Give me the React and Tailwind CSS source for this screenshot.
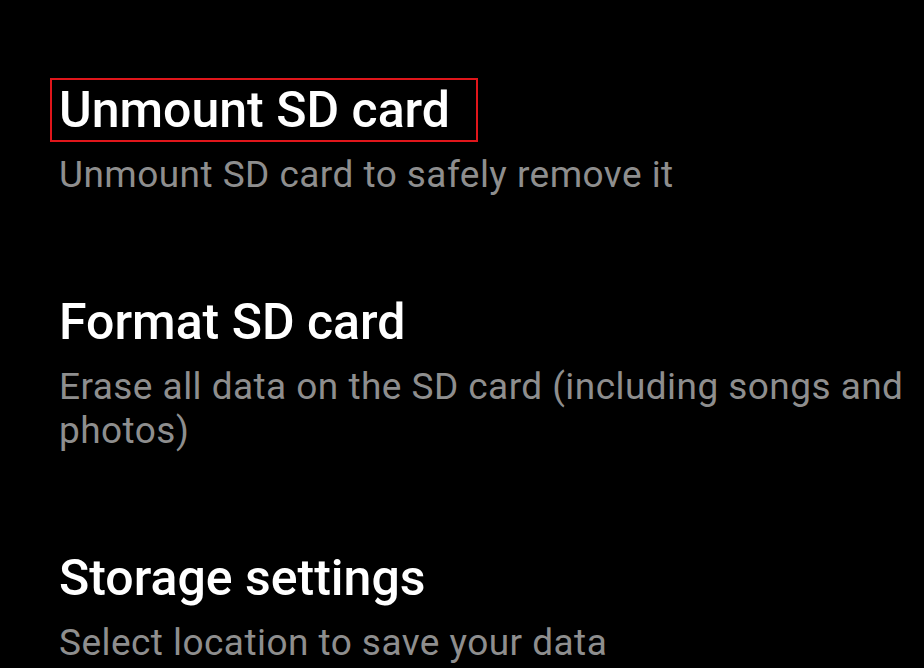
export default function App() {
  const items = [
    { title: "Unmount SD card", sub: "Unmount SD card to safely remove it", boxed: true },
    { title: "Format SD card", sub: "Erase all data on the SD card (including songs and photos)" },
    { title: "Storage settings", sub: "Select location to save your data" },
  ];
  return (
    <div className="w-[924px] h-[668px] bg-black overflow-hidden pl-[59px] pr-[8px] pt-[82px] flex flex-col gap-[97px]" style={{ fontFamily: "Roboto, 'Noto Sans', sans-serif" }}>
      {items.map((it) => (
        <div key={it.title} className="flex flex-col gap-[15px]">
          <div className="relative">
            <div className="text-[50px] leading-[56px] font-medium text-white">{it.title}</div>
            {it.boxed && (
              <div className="absolute left-[-9px] top-[-4px] w-[428px] h-[64px] border-2 border-[#e0161b]" />
            )}
          </div>
          <div className="text-[37px] leading-[44px] tracking-[0.45px] text-[#8e8e8e]">{it.sub}</div>
        </div>
      ))}
    </div>
  );
}
